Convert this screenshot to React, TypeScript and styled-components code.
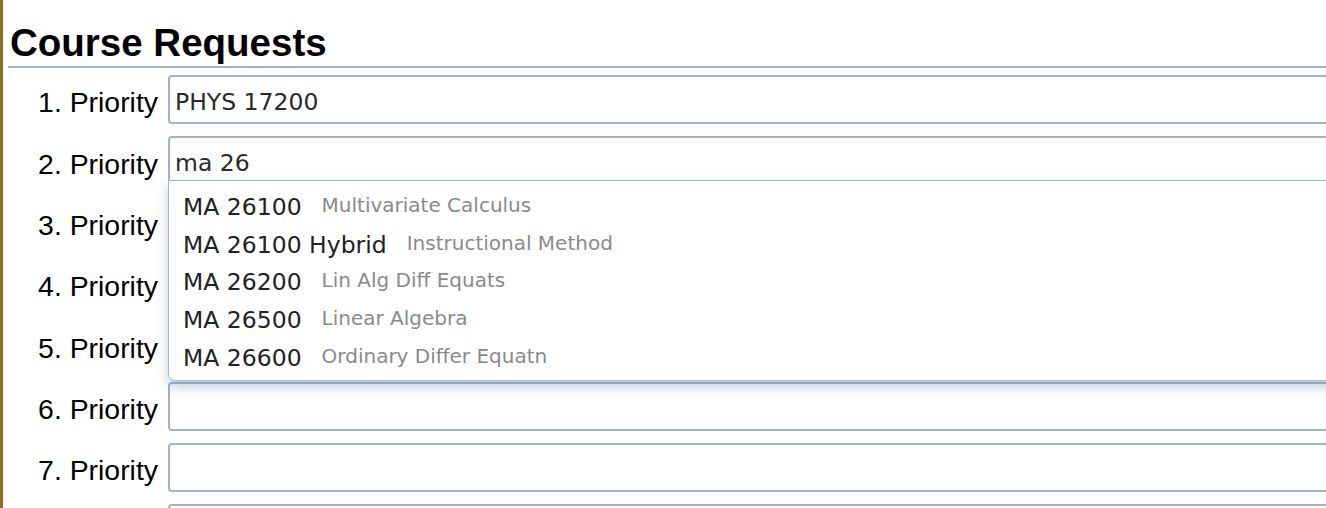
import React from "react";
import styled, { createGlobalStyle } from "styled-components";

const GlobalStyle = createGlobalStyle`
  html, body {
    margin: 0;
    padding: 0;
    background: #ffffff;
    overflow: hidden;
  }
  body {
    border-left: 3px solid #8f6f1e;
    min-height: 100vh;
    box-sizing: border-box;
  }
`;

const Page = styled.div`
  width: 1420px;
  padding-left: 5px;
  display: flex;
  flex-direction: column;
`;

const Header = styled.header`
  padding: 21px 0 1px 2px;
  border-bottom: 2px solid #a2b2c8;
  margin-bottom: 7px;
`;

const Title = styled.h1`
  margin: 0;
  font-family: "Liberation Sans", Arial, sans-serif;
  font-size: 38.5px;
  font-weight: 700;
  line-height: 44px;
  color: #000;
`;

const List = styled.div`
  display: flex;
  flex-direction: column;
  gap: 12.35px;
`;

const Row = styled.div`
  display: flex;
  align-items: center;
  gap: 10px;
  height: 49px;
`;

const Label = styled.label`
  width: 150px;
  flex: none;
  text-align: right;
  font-family: "Liberation Sans", Arial, sans-serif;
  font-size: 28.4px;
  color: #000;
  padding-top: 6.5px;
  white-space: nowrap;
`;

const Field = styled.div`
  position: relative;
  flex: 1;
  height: 49px;
`;

const Input = styled.input`
  box-sizing: border-box;
  width: 100%;
  height: 49px;
  margin: 0;
  border: 2px solid #a2b2c8;
  border-radius: 4px;
  padding: 4.4px 0 0 5px;
  font-family: "DejaVu Sans", Verdana, sans-serif;
  font-size: 23.5px;
  color: #2a2a2a;
  background: #fff;
  outline: none;
`;

const Menu = styled.ul`
  position: absolute;
  top: 44px;
  left: 0;
  right: 0;
  margin: 0;
  padding: 7px 0 4px 14px;
  list-style: none;
  background: #fff;
  border: 1px solid #a6b6cb;
  border-radius: 0 0 7px 7px;
  box-shadow: 0 6px 12px rgba(105, 130, 172, 0.42);
  z-index: 2;
`;

const Item = styled.li`
  display: flex;
  align-items: center;
  gap: 20px;
  height: 37.6px;
  white-space: nowrap;
`;

const Code = styled.span`
  font-family: "DejaVu Sans", Verdana, sans-serif;
  font-size: 23.5px;
  color: #222;
`;

const Desc = styled.span`
  font-family: "DejaVu Sans", Verdana, sans-serif;
  font-size: 20px;
  color: #8a8a8a;
  padding-bottom: 4px;
`;

const suggestions = [
  { code: "MA 26100", desc: "Multivariate Calculus" },
  { code: "MA 26100 Hybrid", desc: "Instructional Method" },
  { code: "MA 26200", desc: "Lin Alg Diff Equats" },
  { code: "MA 26500", desc: "Linear Algebra" },
  { code: "MA 26600", desc: "Ordinary Differ Equatn" },
];

const values = ["PHYS 17200", "ma 26", "", "", "", "", "", ""];

export default function App() {
  return (
    <>
      <GlobalStyle />
      <Page>
        <Header>
          <Title>Course Requests</Title>
        </Header>
        <List>
          {values.map((v, i) => (
            <Row key={i}>
              <Label>{i + 1}. Priority</Label>
              <Field>
                <Input defaultValue={v} readOnly />
                {i === 1 && (
                  <Menu>
                    {suggestions.map((s) => (
                      <Item key={s.code + s.desc}>
                        <Code>{s.code}</Code>
                        <Desc>{s.desc}</Desc>
                      </Item>
                    ))}
                  </Menu>
                )}
              </Field>
            </Row>
          ))}
        </List>
      </Page>
    </>
  );
}
